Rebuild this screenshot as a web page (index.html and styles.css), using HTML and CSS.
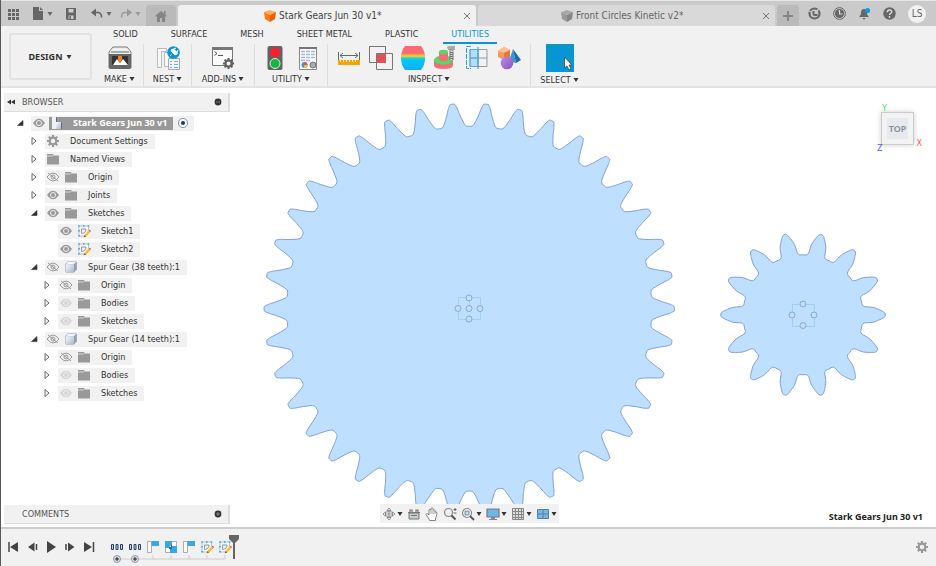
FILE: index.html
```html
<!DOCTYPE html>
<html lang="en">
<head>
<meta charset="utf-8">
<title>Stark Gears Jun 30 v1</title>
<link rel="stylesheet" href="styles.css">
</head>
<body>
<svg class="defs" aria-hidden="true">
  <defs>
    <linearGradient id="metal" x1="0" y1="0" x2="1" y2="1"><stop offset="0" stop-color="#fafcff"/><stop offset="1" stop-color="#a9b4c6"/></linearGradient>
    <linearGradient id="heat" x1="0" y1="0" x2="0" y2="1">
      <stop offset="0" stop-color="#fb6a72"/><stop offset=".3" stop-color="#fb6a72"/><stop offset=".36" stop-color="#ff9a3c"/><stop offset=".42" stop-color="#f8d13c"/><stop offset=".48" stop-color="#4fdc8c"/><stop offset=".56" stop-color="#07c8f4"/><stop offset=".72" stop-color="#07bdfb"/><stop offset="1" stop-color="#12aef5"/>
    </linearGradient>
    <linearGradient id="violet" x1="0" y1="0" x2="1" y2="1"><stop offset="0" stop-color="#b98be8"/><stop offset="1" stop-color="#8b52c8"/></linearGradient>
  </defs>
  <symbol id="caret" viewBox="0 0 6 6"><path d="M.5 1h5L3 5z" fill="currentColor"/></symbol>
  <symbol id="closed" viewBox="0 0 12 12"><path d="M4 2.500v7l4-3.500z" fill="#fff" stroke="#555" stroke-width=".9"/></symbol>
  <symbol id="open" viewBox="0 0 12 12"><path d="M9 3.500v5H3.500z" fill="#333" stroke="#333" stroke-width=".6"/></symbol>
  <symbol id="eye" viewBox="0 0 14 14"><path d="M1 7q6-8.500 12 0q-6 8.500-12 0z" fill="currentColor"/><circle cx="7" cy="7" r="2.500" fill="none" stroke="#f1f1f1" stroke-width="1"/></symbol>
  <symbol id="eye-off" viewBox="0 0 14 14"><path d="M1 7q6-8 12 0q-6 8-12 0z" fill="none" stroke="#999"/><circle cx="7" cy="7" r="2" fill="none" stroke="#999"/><path d="M2 3l10 8" stroke="#999"/></symbol>
  <symbol id="folder" viewBox="0 0 14 14"><path d="M1 2h6l1 1.500h5v9H1z" fill="#999"/><path d="M1 4h5.500l1-1" stroke="#e4e4e4" stroke-width=".8" fill="none"/></symbol>
  <symbol id="gear" viewBox="0 0 14 14"><path d="M7 1v12M1 7h12M2.800 2.800l8.400 8.400M11.200 2.800l-8.400 8.400" stroke="currentColor" stroke-width="2.200"/><circle cx="7" cy="7" r="3.300" fill="#f1f1f1" stroke="currentColor" stroke-width="2.200"/></symbol>
  <symbol id="sketch" viewBox="0 0 14 14"><path d="M2 2h9.500v4M2 2v10h5" fill="#fafafa" stroke="#a4b4c4" stroke-width=".8"/><path d="M4.500 9.500V5H9q0 4-4.500 4.500z" fill="none" stroke="#75899a" stroke-width=".8"/><path d="M1.200 1.200h1.600v1.600H1.200zM6 1.200h1.600v1.600H6zM10.700 1.200h1.600v1.600h-1.600zM1.200 6h1.600v1.600H1.200zM1.200 11h1.600v1.600H1.200z" fill="#38a9e8"/><path d="M7.500 11l4-4.500L13.300 8l-4 4.500z" fill="#ffbc20"/><path d="M7.500 11l1.800 1.500-2.600.8z" fill="#7a552a"/><path d="M11.500 6.500l1-.8 1.500 1.300-.7 1z" fill="#e44"/></symbol>
  <symbol id="body" viewBox="0 0 14 14"><path d="M4 1.500h8q.8 0 .8.800v7L10 12.500H2.500q-1 0-1-1V4z" fill="#8f9db2"/><path d="M4 2h8.200L10 4H2.200z" fill="#f4f7fb"/><path d="M2 4.200h8V12H2z" fill="url(#metal)"/></symbol>
  <symbol id="close" viewBox="0 0 8 8"><path d="M1 1l6 6M7 1L1 7" stroke="#777" stroke-width="1"/></symbol>
  <symbol id="pattern" viewBox="0 0 14 14"><path d="M1.500 4.500h2v5h-2zM6 4.500h2v5H6zM10.500 4.500h2v5h-2z" fill="#bcd3ea" stroke="#263f6b"/></symbol>
  <symbol id="extrude" viewBox="0 0 14 14"><path d="M1.500 1.500h4v11h-4z" fill="#f8f8f8" stroke="#999" stroke-width=".8"/><path d="M5.500 1H13v5H5.500z" fill="#39a7e8"/></symbol>
  <symbol id="plus" viewBox="0 0 8 8"><circle cx="4" cy="4" r="3.500" fill="#d8e3ee" stroke="#8790a0" stroke-width=".9"/><path d="M4 2v4M2 4h4" stroke="#222"/></symbol>
</svg>

<header class="titlebar">
  <nav class="quick">
    <button class="icon-btn apps" aria-label="Apps"><svg width="12" height="12" viewBox="0 0 12 12"><path d="M1 1h3v3H1zM5 1h3v3H5zM9 1h3v3H9zM1 5h3v3H1zM5 5h3v3H5zM9 5h3v3H9zM1 9h3v3H1zM5 9h3v3H5zM9 9h3v3H9z" fill="#666"/></svg></button>
    <button class="icon-btn file" aria-label="File"><svg width="12" height="13" viewBox="0 0 12 13"><path d="M1 0h6v4h4v9H1z" fill="#666"/><path d="M8 0l3 3H8z" fill="#666"/></svg><svg width="6" height="6"><use href="#caret"/></svg></button>
    <button class="icon-btn save" aria-label="Save"><svg width="12" height="12" viewBox="0 0 12 12"><path d="M1 0h10v12H2L1 11z" fill="#666"/><path d="M3.500 1h5v3.500h-5z" fill="#ccc"/><path d="M3.500 7.500h5V11h-5z" fill="#ccc"/><path d="M4.500 8h1.500v3H4.500zM2 5.500h8v1H2z" fill="#666"/></svg></button>
    <button class="icon-btn undo" aria-label="Undo"><svg width="12" height="11" viewBox="0 0 12 11"><path d="M2 4.500h5q3.500 0 3.500 5" fill="none" stroke="#666" stroke-width="1.600"/><path d="M5 .5v8l-5-4z" fill="#666"/></svg><svg width="6" height="6"><use href="#caret"/></svg></button>
    <button class="icon-btn redo" aria-label="Redo"><svg width="12" height="11" viewBox="0 0 12 11"><path d="M10 4.500H5q-3.500 0-3.500 5" fill="none" stroke="#999" stroke-width="1.400"/><path d="M7 .5v8l5-4z" fill="#999"/></svg><svg width="6" height="6"><use href="#caret"/></svg></button>
  </nav>
  <button class="home" aria-label="Home"><svg width="12" height="12" viewBox="0 0 12 12"><path d="M6 1l6 5-1 1-1-1v6H7V8H5v4H2V6L1 7 0 6z" fill="#858585"/><path d="M9 1h1.500v4L9 3.500z" fill="#858585"/></svg></button>
  <div class="doc-tab active"><span></span><span class="doc-name"><svg width="12" height="12" viewBox="0 0 12 12"><path d="M6 0l6 2-6 3-6-3z" fill="#ffac65"/><path d="M0 2l6 3v7L1 9z" fill="#ff7a12"/><path d="M12 2L6 5v7l5-3z" fill="#ee5d00"/></svg>Stark Gears Jun 30 v1*</span><button class="icon-btn" aria-label="Close Stark Gears"><svg width="8" height="8"><use href="#close"/></svg></button></div>
  <div class="doc-tab"><span></span><span class="doc-name"><svg width="12" height="12" viewBox="0 0 12 12"><path d="M6 0l6 2-6 3-6-3z" fill="#aaa"/><path d="M0 2l6 3v7L1 9z" fill="#999"/><path d="M12 2L6 5v7l5-3z" fill="#858585"/></svg>Front Circles Kinetic v2*</span><button class="icon-btn" aria-label="Close Front Circles"><svg width="8" height="8"><use href="#close"/></svg></button></div>
  <button class="new-tab" aria-label="New tab"><svg width="10" height="10" viewBox="0 0 10 10"><path d="M5 0v10M0 5h10" stroke="#858585" stroke-width="2"/></svg></button>
  <nav class="account">
    <button class="icon-btn" aria-label="Extensions"><svg width="13" height="13" viewBox="0 0 13 13"><circle cx="6.500" cy="6.500" r="5" fill="none" stroke="#666" stroke-width="2.200"/><path d="M5.500 4v2.500q0 1.500 1.500 1.500h2.500" fill="none" stroke="#666" stroke-width="2"/><path d="M7.500 5.500L12 1" stroke="#ccc" stroke-width="1.300"/><path d="M1 4l2.500 1" stroke="#ccc" stroke-width="1"/></svg></button>
    <button class="icon-btn" aria-label="Job status"><svg width="13" height="13" viewBox="0 0 13 13"><circle cx="6.500" cy="6.500" r="5.900" fill="none" stroke="#666"/><circle cx="6.500" cy="6.500" r="4.600" fill="#666"/><path d="M6.500 3v4H9.500" stroke="#ddd" fill="none" stroke-width="1.200"/></svg></button>
    <button class="icon-btn" aria-label="Notifications"><svg width="13" height="13" viewBox="0 0 13 13"><path d="M1 10q2-1.500 2-4 0-4 3-4t3 4q0 2.500 2 4z" fill="#666"/><path d="M4.500 11h3L6 13z" fill="#666"/><circle cx="9.500" cy="3.500" r="2.600" fill="#1199e0"/></svg></button>
    <button class="icon-btn" aria-label="Help"><svg width="13" height="13" viewBox="0 0 13 13"><circle cx="6.500" cy="6.500" r="6.200" fill="#666"/><path d="M4.300 5.200q0-2.200 2.200-2.200t2.200 1.900q0 1.100-1.300 1.700-.9.500-.9 1.500" fill="none" stroke="#ddd" stroke-width="1.400"/><circle cx="6.500" cy="9.900" r=".9" fill="#ddd"/></svg></button>
    <button class="avatar">LS</button>
  </nav>
</header>

<section class="ribbon">
  <button class="workspace">DESIGN <svg width="6" height="6"><use href="#caret"/></svg></button>
  <div class="ribbon-main">
    <nav class="ribbon-tabs">
      <a href="#">SOLID</a><a href="#">SURFACE</a><a href="#">MESH</a><a href="#">SHEET METAL</a><a href="#">PLASTIC</a><a href="#" class="current">UTILITIES</a>
    </nav>
    <div class="groups">
      <div class="group make"><div class="tools">
        <svg width="24" height="24" viewBox="0 0 24 24"><path d="M5 1h14l4 5v16H1V6z" fill="#eee" stroke="#777"/><path d="M1 8h22v13q0 2-2 2H3q-2 0-2-2z" fill="#666"/><path d="M3 5h18v2H3z" fill="#aaa"/><path d="M4 10h16v9H4z" fill="#333"/><path d="M5 19l4-6 3 4 3-4 5 6z" fill="#fff"/><path d="M10 10h4v4l-2 3-2-3z" fill="#f58220"/></svg>
      </div><button class="group-name">MAKE <svg width="6" height="6"><use href="#caret"/></svg></button></div>
      <div class="group nest"><div class="tools">
        <svg width="24" height="24" viewBox="0 0 24 24"><path d="M1.500 2.500h9v3h-5v16h-4zM8.500 6.500h5v14h-5z" fill="#f8f8f8" stroke="#bbb"/><path d="M12.500 12.500h11v11h-11z" fill="#f4f4f4" stroke="#aaa"/><path d="M14 15.500h2M18 15.500h4M14 18.500h2M18 18.500h4M14 21.500h2M18 21.500h4" stroke="#65b7e4"/><circle cx="17.500" cy="6.500" r="6.300" fill="#0c96da"/><path d="M14 10l1.500-1.500M15 5l4 4q2.500-.5 2.500-2.500L17.500 3Q15 3 15 5zM18 3l2-1M21 6l1-2" fill="#fff" stroke="#fff"/></svg>
      </div><button class="group-name">NEST <svg width="6" height="6"><use href="#caret"/></svg></button></div>
      <div class="group addins"><div class="tools">
        <svg width="24" height="24" viewBox="0 0 24 24"><path d="M1.500 1.500h20v18h-20z" fill="#fafafa" stroke="#777"/><path d="M1 1h21v3H1z" fill="#777"/><path d="M3.500 5.500l2.500 2-2.500 2M7 9.500h5" fill="none" stroke="#555"/><svg x="11" y="11" width="13" height="13" color="#606060"><use href="#gear"/></svg></svg>
      </div><button class="group-name">ADD-INS <svg width="6" height="6"><use href="#caret"/></svg></button></div>
      <div class="group utility"><div class="tools">
        <svg width="24" height="24" viewBox="0 0 24 24"><rect x="4.500" width="15" height="24" rx="2" fill="#636363"/><circle cx="12" cy="6.500" r="5" fill="#fb1f2b"/><circle cx="12" cy="17.500" r="5" fill="#16b746" stroke="#d4f4dd"/></svg>
        <svg width="24" height="24" viewBox="0 0 24 24"><path d="M4.500 1.500h17v22h-17z" fill="#fafafa" stroke="#888"/><path d="M4 1h18v2H4z" fill="#777"/><path d="M6 5.500h4M11 5.500h4M16 5.500h4M6 8.500h4M11 8.500h4M16 8.500h4M6 11.500h4M11 11.500h4M16 11.500h4M6 14.500h4M11 14.500h4" stroke="#aab9da" stroke-width="1.500"/><circle cx="9.500" cy="19" r="3" fill="#5a87d2"/><path d="M9.500 19v-3a3 3 0 0 1 3 3z" fill="#e2574c"/><path d="M9.500 19h3a3 3 0 0 1-4 2.800z" fill="#f7c12f"/><circle cx="18" cy="19" r="3" fill="#aaa" stroke="#777"/></svg>
      </div><button class="group-name">UTILITY <svg width="6" height="6"><use href="#caret"/></svg></button></div>
      <div class="group inspect"><div class="tools">
        <svg width="24" height="24" viewBox="0 0 24 24"><path d="M1.500 6v8M22.500 6v8M3 9.500h18M6 7L3 9.500 6 12M18 7l3 2.500L18 12" fill="none" stroke="#666"/><path d="M1 14h22v5H1z" fill="#f7a400"/><path d="M3.500 14v2M6.500 14v2M9.500 14v2M12.500 14v2M15.500 14v2M18.500 14v2" stroke="#fff0c0"/></svg>
        <svg width="24" height="24" viewBox="0 0 24 24"><path d="M.5.500h16v16H.5z" fill="none" stroke="#777"/><path d="M7.500 7.500h16v16h-16z" fill="#f1f1f1" stroke="#777"/><path d="M.5.500h16v16H.5z" fill="none" stroke="#777"/><path d="M8 8h9v9H8z" fill="#e05259"/></svg>
        <svg width="24" height="24" viewBox="0 0 24 24"><path d="M4 0h16q4 5 4 12t-4 12H4q-4-5-4-12T4 0z" fill="url(#heat)"/></svg>
        <svg width="24" height="24" viewBox="0 0 24 24"><path d="M1 14v5q0 4 9.500 4t9.500-4v-5z" fill="#f46d75"/><ellipse cx="10.500" cy="14" rx="9.500" ry="4.500" fill="#54da68"/><path d="M6 6v8q4.500 2.500 9 0V6z" fill="#f46d75"/><ellipse cx="10.500" cy="6" rx="4.500" ry="2.300" fill="#54da68"/><path d="M14 1l2-1h6v4h-7z" fill="#aaa"/><path d="M17 4h3v10l-2 1-1-1z" fill="#ddd" stroke="#777" stroke-width=".7"/><path d="M16.500 6l4 1M16.500 8l4 1M16.500 10l4 1M16.500 12l4 1" stroke="#666"/></svg>
        <svg width="24" height="24" viewBox="0 0 24 24"><path d="M5 3h8v18H5z" fill="#b4dff8"/><path d="M5 3.500h17v17H5zM5 12h17M13 3v18" fill="none" stroke="#999"/><path d="M6 .5H1.500v22H6M13 1v22" fill="none" stroke="#26a0df" stroke-dasharray="5 1"/><path d="M5 3.500h8v17H5zM5 12h8" fill="none" stroke="#51ace0"/></svg>
        <svg width="24" height="24" viewBox="0 0 24 24"><path d="M7 1l6 3v7l-6 3-6-3V5z" fill="#f39a5c"/><path d="M1 5l6 2 6-3-6-3z" fill="#ffc092"/><path d="M7 7l6-3v7l-6 3z" fill="#e17c3c"/><path d="M16 3l-4 12 7 2z" fill="#3b96cf"/><path d="M16 3l8 11-5 3z" fill="#1c6da6"/><circle cx="10" cy="17" r="6.300" fill="url(#violet)"/></svg>
      </div><button class="group-name">INSPECT <svg width="6" height="6"><use href="#caret"/></svg></button></div>
      <div class="group select"><div class="tools">
        <svg width="28" height="28" viewBox="0 0 28 28"><path d="M0 0h28v28H0z" fill="#0696d7"/><path d="M2.500 2.500h20v16h-20z" fill="none" stroke="#19a673" stroke-dasharray="3 2"/><path d="M18.500 13v11l2.500-2 2 4 2-1-2-4h3z" fill="#fff" stroke="#444" stroke-width=".8"/></svg>
      </div><button class="group-name">SELECT <svg width="6" height="6"><use href="#caret"/></svg></button></div>
    </div>
  </div>
</section>

<main class="canvas">
  <svg class="model" viewBox="0 88 936 440" preserveAspectRatio="xMidYMid slice">
    <g fill="#bfdfff" stroke="#7f9ed6" stroke-width="1"><path id="gear38"/><path id="gear14"/></g>
    <g fill="none" stroke="#9bd0fa"><path d="M458.500 297.500h22v22h-22zM469.500 297.500v11M792.500 304.500h22v22h-22z"/></g>
    <g fill="#bfdfff" stroke="#8ba9cc"><circle cx="469" cy="298" r="3"/><circle cx="458" cy="308.500" r="3"/><circle cx="469" cy="308.500" r="3"/><circle cx="480" cy="308.500" r="3"/><circle cx="469" cy="319" r="3"/><circle cx="803" cy="304" r="3"/><circle cx="792" cy="315" r="3"/><circle cx="814" cy="315" r="3"/><circle cx="803" cy="325.500" r="3"/></g>
  </svg>

  <section class="browser">
    <header class="panel-bar"><svg width="8" height="8" viewBox="0 0 8 8"><path d="M4 1.500v5L0 4zM8 1.500v5L4 4z" fill="#333"/></svg><span>BROWSER</span><svg width="8" height="8" viewBox="0 0 8 8"><circle cx="4" cy="4" r="3.400" fill="#333"/><path d="M2 4h4" stroke="#777"/></svg></header>
    <ul class="tree">
      <li><svg class="arrow"><use href="#open"/></svg><span class="chip root"><svg class="eye"><use href="#eye"/></svg><span class="root-name"><svg class="ico" viewBox="0 0 14 14"><path d="M3 1h4v12H3z" fill="#eef2f7"/><path d="M7 6h5v7H7z" fill="url(#metal)"/><path d="M7 1l1 1v4H7zM12 6l1 1v6h-1z" fill="#667"/></svg>Stark Gears Jun 30 v1</span><svg class="ico" viewBox="0 0 14 14"><circle cx="7" cy="7" r="4.600" fill="#f4f8fc" stroke="#8b95a3"/><circle cx="7" cy="7" r="2" fill="#26364f"/></svg></span></li>
      <li class="l1"><svg class="arrow"><use href="#closed"/></svg><span class="chip"><svg class="ico"><use href="#gear"/></svg><span>Document Settings</span></span></li>
      <li class="l1"><svg class="arrow"><use href="#closed"/></svg><span class="chip"><svg class="ico"><use href="#folder"/></svg><span>Named Views</span></span></li>
      <li class="l1"><svg class="arrow"><use href="#closed"/></svg><span class="chip"><svg class="eye"><use href="#eye-off"/></svg><svg class="ico"><use href="#folder"/></svg><span>Origin</span></span></li>
      <li class="l1"><svg class="arrow"><use href="#closed"/></svg><span class="chip"><svg class="eye"><use href="#eye"/></svg><svg class="ico"><use href="#folder"/></svg><span>Joints</span></span></li>
      <li class="l1"><svg class="arrow"><use href="#open"/></svg><span class="chip"><svg class="eye"><use href="#eye"/></svg><svg class="ico"><use href="#folder"/></svg><span>Sketches</span></span></li>
      <li class="l2"><svg class="arrow"></svg><span class="chip"><svg class="eye"><use href="#eye"/></svg><svg class="ico"><use href="#sketch"/></svg><span>Sketch1</span></span></li>
      <li class="l2"><svg class="arrow"></svg><span class="chip"><svg class="eye"><use href="#eye"/></svg><svg class="ico"><use href="#sketch"/></svg><span>Sketch2</span></span></li>
      <li class="l1"><svg class="arrow"><use href="#open"/></svg><span class="chip"><svg class="eye"><use href="#eye-off"/></svg><svg class="ico"><use href="#body"/></svg><span>Spur Gear (38 teeth):1</span></span></li>
      <li class="l2"><svg class="arrow"><use href="#closed"/></svg><span class="chip"><svg class="eye"><use href="#eye-off"/></svg><svg class="ico"><use href="#folder"/></svg><span>Origin</span></span></li>
      <li class="l2"><svg class="arrow"><use href="#closed"/></svg><span class="chip"><svg class="eye dim"><use href="#eye"/></svg><svg class="ico"><use href="#folder"/></svg><span>Bodies</span></span></li>
      <li class="l2"><svg class="arrow"><use href="#closed"/></svg><span class="chip"><svg class="eye dim"><use href="#eye"/></svg><svg class="ico"><use href="#folder"/></svg><span>Sketches</span></span></li>
      <li class="l1"><svg class="arrow"><use href="#open"/></svg><span class="chip"><svg class="eye"><use href="#eye-off"/></svg><svg class="ico"><use href="#body"/></svg><span>Spur Gear (14 teeth):1</span></span></li>
      <li class="l2"><svg class="arrow"><use href="#closed"/></svg><span class="chip"><svg class="eye"><use href="#eye-off"/></svg><svg class="ico"><use href="#folder"/></svg><span>Origin</span></span></li>
      <li class="l2"><svg class="arrow"><use href="#closed"/></svg><span class="chip"><svg class="eye dim"><use href="#eye"/></svg><svg class="ico"><use href="#folder"/></svg><span>Bodies</span></span></li>
      <li class="l2"><svg class="arrow"><use href="#closed"/></svg><span class="chip"><svg class="eye dim"><use href="#eye"/></svg><svg class="ico"><use href="#folder"/></svg><span>Sketches</span></span></li>
    </ul>
  </section>

  <section class="panel-bar comments"><span>COMMENTS</span><svg width="8" height="8" viewBox="0 0 8 8"><circle cx="4" cy="4" r="3.400" fill="#333"/><path d="M2 4h4M4 2v4" stroke="#999" stroke-width=".8"/></svg></section>

  <div class="viewcube"><button class="cube-face"><span>TOP</span></button><span class="axis y">Y</span><span class="axis z">Z</span><span class="axis x">X</span></div>

  <div class="navbar">
    <button class="icon-btn" aria-label="Orbit"><svg width="14" height="14" viewBox="0 0 14 14"><path d="M7 2v10M2 7h10" stroke="#888" stroke-width=".8"/><ellipse cx="7" cy="7" rx="4.500" ry="2.300" fill="none" stroke="#888" stroke-width=".9"/><path d="M7 1l2 2.500H5zM7 13l2-2.500H5zM1 7l2.500-2v4zM13 7l-2.500-2v4z" fill="#fff" stroke="#777" stroke-width=".8"/></svg><svg width="6" height="6"><use href="#caret"/></svg></button>
    <button class="icon-btn" aria-label="Look at"><svg width="14" height="14" viewBox="0 0 14 14"><path d="M2 6h10v6H2z" fill="#c4cdcf" stroke="#777"/><path d="M3 5V3h2v2M9 5V3h2v2M1 5.500h12" fill="none" stroke="#777" stroke-width="1.200"/><path d="M4 8.500h6" stroke="#777"/></svg></button>
    <button class="icon-btn" aria-label="Pan"><svg width="14" height="14" viewBox="0 0 14 14"><path d="M4 12L1 7.500q0-1.500 2-.5l1 1V3q1-1.500 2 0V1.500q1-1.500 2 0V3q1.500-1 2 .500V5q2-.5 2 1.500L10.500 12v1.500h-6z" fill="#fff" stroke="#777" stroke-width=".9"/><path d="M6 3v4M8 3v4M10 4v3" stroke="#888" stroke-width=".8"/></svg></button>
    <button class="icon-btn" aria-label="Zoom"><svg width="14" height="14" viewBox="0 0 14 14"><circle cx="5.500" cy="5.500" r="4" fill="#e8f2f8" stroke="#888" stroke-width="1.200"/><path d="M8.500 8.500l4 4" stroke="#555" stroke-width="2"/><path d="M10.500 2.500h3M12 1v3M10.500 6h3" stroke="#444" stroke-width=".8"/></svg></button>
    <button class="icon-btn" aria-label="Fit"><svg width="14" height="14" viewBox="0 0 14 14"><circle cx="6" cy="6" r="4.500" fill="#f8f8f8" stroke="#888" stroke-width="1.200"/><path d="M4 4h4v4H4z" fill="#bbd9ec" stroke="#777" stroke-width=".8"/><path d="M9 9l4 4" stroke="#555" stroke-width="1.800"/></svg><svg width="6" height="6"><use href="#caret"/></svg></button>
    <button class="icon-btn" aria-label="Display settings"><svg width="14" height="14" viewBox="0 0 14 14"><path d="M1 2h12v8H1z" fill="#6fb6e8" stroke="#778" stroke-width="1.200"/><path d="M5 10h4v2h2v1H3v-1h2z" fill="#888"/></svg><svg width="6" height="6"><use href="#caret"/></svg></button>
    <button class="icon-btn" aria-label="Grid and snaps"><svg width="14" height="14" viewBox="0 0 14 14"><path d="M1.500 1.500h11v11h-11zM1 4.500h12M1 7.500h12M1 10.500h12M4.500 1v12M7.500 1v12M10.500 1v12" fill="#ddd" stroke="#888"/></svg><svg width="6" height="6"><use href="#caret"/></svg></button>
    <button class="icon-btn" aria-label="Viewports"><svg width="14" height="14" viewBox="0 0 14 14"><path d="M1.500 2.500h11v9h-11zM1 7h12M7 2v10" fill="#72b8ea" stroke="#567e9e"/></svg><svg width="6" height="6"><use href="#caret"/></svg></button>
  </div>
  <strong class="doc-label">Stark Gears Jun 30 v1</strong>
</main>

<footer class="timeline">
  <div class="playback">
    <button class="icon-btn" aria-label="First"><svg width="13" height="12" viewBox="0 0 13 12"><path d="M2 1v10" stroke="#444" stroke-width="1.500"/><path d="M11 1v10L3 6z" fill="#444"/></svg></button>
    <button class="icon-btn" aria-label="Previous"><svg width="13" height="12" viewBox="0 0 13 12"><path d="M8.500 1.500v9L2 6z" fill="#444"/><path d="M10.500 3v6" stroke="#444" stroke-width="1.500"/></svg></button>
    <button class="icon-btn" aria-label="Play"><svg width="13" height="12" viewBox="0 0 13 12"><path d="M2 0v12l9-6z" fill="#444"/></svg></button>
    <button class="icon-btn" aria-label="Next"><svg width="13" height="12" viewBox="0 0 13 12"><path d="M4 1.500v9L10.500 6z" fill="#444"/><path d="M2 3v6" stroke="#444" stroke-width="1.500"/></svg></button>
    <button class="icon-btn" aria-label="Last"><svg width="13" height="12" viewBox="0 0 13 12"><path d="M10.500 1v10" stroke="#444" stroke-width="1.500"/><path d="M1 1v10l8-5z" fill="#444"/></svg></button>
  </div>
  <ol class="features">
    <li><svg class="ico"><use href="#pattern"/></svg><svg class="mark" viewBox="0 0 18 10"><path d="M9 5h9" stroke="#ccc"/><svg x="5" y="1" width="8" height="8"><use href="#plus"/></svg></svg></li>
    <li><svg class="ico"><use href="#pattern"/></svg><svg class="mark" viewBox="0 0 18 10"><path d="M0 5h18" stroke="#ccc"/><svg x="5" y="1" width="8" height="8"><use href="#plus"/></svg></svg></li>
    <li><svg class="ico"><use href="#extrude"/></svg><svg class="mark" viewBox="0 0 18 10"><path d="M0 5h18M9 1v4" stroke="#ccc"/></svg></li>
    <li><svg class="ico" viewBox="0 0 14 14"><path d="M1.500 1.500h11v11h-11z" fill="#fff" stroke="#999" stroke-width=".8"/><path d="M1 1h7v5H5v2H1zM6 8h2V6h5v7H6z" fill="#36a7e9"/><path d="M5 5h3v4H5z" fill="#246fa4"/><path d="M5.500 5.500h1.500v1.500H5.500z" fill="#fff"/></svg><svg class="mark" viewBox="0 0 18 10"><path d="M0 5h18M9 1v4" stroke="#ccc"/></svg></li>
    <li><svg class="ico"><use href="#extrude"/></svg><svg class="mark" viewBox="0 0 18 10"><path d="M0 5h18M9 1v4" stroke="#ccc"/></svg></li>
    <li><svg class="ico"><use href="#sketch"/></svg><svg class="mark" viewBox="0 0 18 10"><path d="M0 5h18M9 1v4" stroke="#ccc"/></svg></li>
    <li><svg class="ico"><use href="#sketch"/></svg><svg class="mark" viewBox="0 0 18 10"><path d="M0 5h9V1" fill="none" stroke="#ccc"/></svg></li>
  </ol>
  <svg class="playhead" width="10" height="26" viewBox="0 0 10 26"><path d="M0 1h10v4L6 9v16H4V9L0 5z" fill="#666"/></svg>
  <button class="icon-btn settings" aria-label="Timeline settings"><svg width="14" height="14"><use href="#gear"/></svg></button>
</footer>
<script src="script.js"></script>
</body>
</html>
```
FILE: styles.css
```css
* { box-sizing: border-box; }
body {
  margin: 0;
  min-height: 100vh;
  display: flex;
  flex-direction: column;
  border-left: 1px solid #55585c;
  background: #f1f1f1;
  color: #333;
  font: 9px/14px "DejaVu Sans Condensed", "Noto Sans", sans-serif;
}
svg { display: block; flex: none; }
.defs { position: absolute; width: 0; height: 0; }
button { border: 0; padding: 0; margin: 0; background: none; color: inherit; font: inherit; }
a { color: inherit; text-decoration: none; }
ul, ol { list-style: none; margin: 0; padding: 0; }
.icon-btn { display: flex; align-items: center; gap: 3px; }

.titlebar {
  display: flex;
  align-items: stretch;
  height: 26px;
  padding-top: 4px;
  background: #cacaca;
  border-top: 1px solid #e6e6e6;
}
.quick { display: flex; align-items: center; width: 145px; padding: 0 0 4px 6px; color: #666; }
.file { margin-left: 13px; }
.save { margin-left: 12px; }
.undo { margin-left: 14px; }
.redo { margin-left: 8px; color: #999; }
.home, .new-tab { display: flex; align-items: center; justify-content: center; background: #bababa; border-radius: 3px 3px 0 0; }
.home { width: 30px; }
.new-tab { width: 22px; margin-left: 2px; }
.doc-tab {
  flex: 1;
  margin-left: 2px;
  display: grid;
  grid-template-columns: 0 1fr 8px;
  align-items: center;
  padding: 0 5px;
  background: #d9d9d9;
  border-radius: 3px 3px 0 0;
  font-size: 10px;
  color: #666;
}
.doc-tab.active { background: #f1f1f1; color: #444; }
.doc-name { display: flex; align-items: center; justify-content: center; gap: 3px; }
.account { display: flex; align-items: center; gap: 12px; padding: 0 10px 4px 9px; }
.avatar { width: 18px; height: 18px; border-radius: 50%; background: #f1f1f1; color: #666; font-size: 10px; }

.ribbon { display: flex; height: 62px; padding: 7px 8px 0; border-bottom: 2px solid #e4e4e4; }
.workspace {
  display: flex;
  align-items: center;
  justify-content: center;
  gap: 4px;
  width: 83px;
  height: 47px;
  border: 2px solid #e2e2e2;
  border-radius: 3px;
  font-family: "Noto Sans", sans-serif;
  font-weight: 700;
}
.ribbon-main { flex: 1; }
.ribbon-tabs { display: flex; gap: 33px; height: 11px; padding-left: 21px; }
.ribbon-tabs a { height: 17px; margin-top: -6px; flex: none; line-height: 14px; }
.ribbon-tabs .current { color: #0696d7; border-bottom: 2px solid #0696d7; padding: 0 8px; margin-left: -8px; }
.groups { display: flex; }
.group { display: flex; flex-direction: column; align-items: center; gap: 1px; height: 42px; border-left: 1px solid #ddd; }
.group.make { border: 0; }
.make { width: 51px; padding-left: 4px; }
.nest { width: 48px; }
.addins { width: 63px; }
.utility { width: 73px; }
.inspect { width: 203px; }
.select { width: 58px; }
.tools { display: flex; align-items: center; gap: 8px; height: 28px; }
.group-name { display: flex; align-items: center; gap: 2px; }

.canvas {
  position: relative;
  flex: 1;
  display: flex;
  flex-direction: column;
  padding: 5px 3px 3px;
  background: #fff;
  border-bottom: 2px solid #cdcdcd;
}
.model { position: absolute; top: 0; left: -1px; width: calc(100% + 1px); height: 440px; }
.browser, .comments { position: relative; width: 226px; }
.panel-bar {
  display: flex;
  align-items: center;
  gap: 7px;
  height: 19px;
  padding: 0 6px 0 3px;
  background: #f1f1f1;
  border-right: 2px solid #ddd;
  border-bottom: 1px solid #ddd;
  color: #555;
}
.panel-bar span { flex: 1; }
.comments { margin-top: auto; padding-left: 18px; }
.tree { padding-top: 2px; }
.tree li { display: flex; align-items: center; gap: 5px; height: 18px; padding-left: 10px; }
.tree .l1 { padding-left: 24px; }
.tree .l2 { padding-left: 37px; }
.arrow { width: 12px; height: 12px; }
.eye, .ico { width: 14px; height: 14px; color: #999; }
.eye.dim { color: #d4d4d4; }
.chip { display: flex; align-items: center; gap: 4px; height: 15px; padding: 0 7px 0 1px; background: #f1f1f1; white-space: nowrap; }
.chip > span:last-child { padding-left: 6px; }
.chip.root { gap: 3px; padding-right: 4px; }
.root-name { display: flex; align-items: center; gap: 10px; height: 13px; padding-right: 6px; background: #999; color: #fff; font-family: "Noto Sans", sans-serif; font-weight: 700; }

.viewcube { position: absolute; top: 15px; right: 14px; width: 45px; height: 50px; }
.cube-face { display: flex; align-items: center; justify-content: center; width: 33px; height: 33px; margin: 9px 0 0 4px; background: #f3f3f3; border: 1px solid #ccc; box-shadow: 0 0 5px #ccc; }
.cube-face span { width: 21px; height: 21px; line-height: 21px; background: #e6e9ed; color: #888e96; font-family: "Noto Sans", sans-serif; font-weight: 600; }
.axis { position: absolute; line-height: 10px; }
.axis.y { top: 0; left: 5px; color: #3fdc55; }
.axis.z { bottom: 0; left: 0; color: #5c5cf0; }
.axis.x { bottom: 5px; right: 0; color: #f55; }
.navbar { position: absolute; left: 379px; bottom: 4px; display: flex; align-items: center; gap: 4px; height: 19px; padding: 0 2px; background: #f1f1f1; }
.navbar .icon-btn { gap: 1px; }
.doc-label { position: absolute; right: 13px; bottom: 3px; color: #222; font-family: "Noto Sans", sans-serif; }

.timeline { display: flex; align-items: flex-start; height: 37px; padding: 5px 7px 0 6px; }
.playback { display: flex; gap: 6px; padding-top: 7px; }
.features { display: flex; margin-left: 12px; padding-top: 6px; }
.features li { display: flex; flex-direction: column; align-items: center; width: 18px; }
.mark { width: 18px; height: 10px; }
.playhead { margin-left: -5px; }
.settings { margin: 6px 0 0 auto; color: #999; }
```
FILE: script.js
```js
// Half tooth profiles as [distance from centre, offset from the tooth axis].
const profile38 = [[182.4, 15.1], [182.6, 12.4], [184.2, 10.7], [187.5, 9.1], [194, 6.6], [200, 4.7], [204, 2.9], [205.1, 2]];
const profile14 = [[60, 13.4], [60, 9.8], [62, 8.2], [66, 7.9], [71, 7.3], [77, 4.8], [81, 2.6], [82.2, 1]];

function gearPath(cx, cy, teeth, profile) {
  const points = [];
  for (let i = 0; i < teeth; i++) {
    const axis = (i * 2 * Math.PI) / teeth;
    const add = ([r, off], side) => {
      const a = axis + side * Math.asin(off / r);
      points.push([cx + r * Math.cos(a), cy + r * Math.sin(a)]);
    };
    profile.forEach(p => add(p, -1));
    profile.slice(1).reverse().forEach(p => add(p, 1));
  }
  const n = points.length;
  let d = `M${points[0]}`;
  for (let i = 0; i < n; i++) {
    const [a, b, c, e] = [-1, 0, 1, 2].map(k => points[(i + k + n) % n]);
    d += `C${b[0] + (c[0] - a[0]) / 7},${b[1] + (c[1] - a[1]) / 7} ${c[0] - (e[0] - b[0]) / 7},${c[1] - (e[1] - b[1]) / 7} ${c}`;
  }
  return d + "Z";
}

document.getElementById("gear38").setAttribute("d", gearPath(469.3, 308.7, 38, profile38));
document.getElementById("gear14").setAttribute("d", gearPath(803, 314.8, 14, profile14));
```
